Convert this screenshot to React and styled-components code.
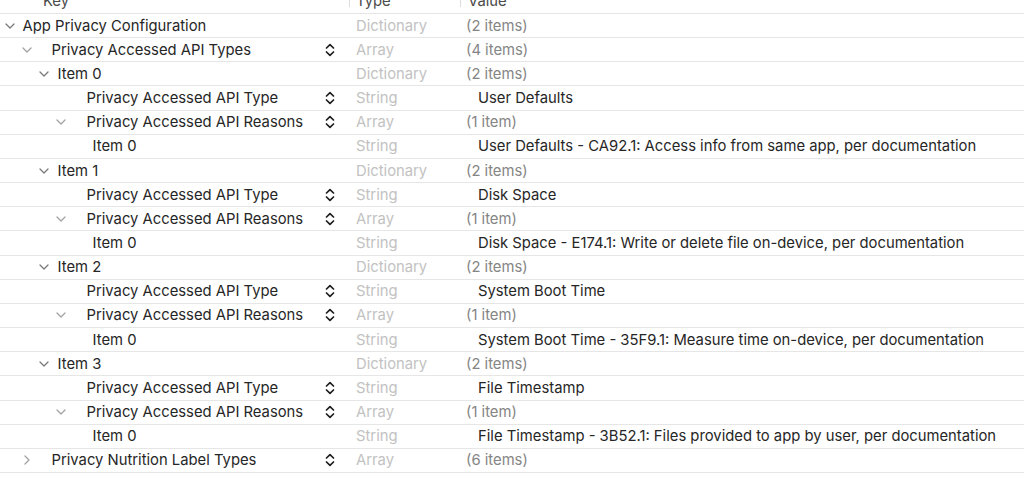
import React from "react";
import styled, { createGlobalStyle } from "styled-components";

const GlobalStyle = createGlobalStyle`
  body {
    margin: 0;
    background: #ffffff;
    font-family: Inter, "Liberation Sans", Arial, sans-serif;
    -webkit-font-smoothing: antialiased;
  }
`;

const ROW_HEIGHT = 24.17;
const FONT_SIZE = "14.8px";

const Editor = styled.div`
  width: 1024px;
  height: 496px;
  background: #ffffff;
  overflow: hidden;
`;

const Header = styled.div`
  display: grid;
  grid-template-columns: 349px 111px 1fr;
  align-items: start;
  height: 13px;
  border-bottom: 1px solid #e4e4e4;
  overflow: hidden;
`;

const HeaderCell = styled.div`
  display: flex;
  align-items: flex-end;
  height: 7px;
  padding-left: ${(props) => props.inset}px;
  border-left: ${(props) => (props.divider ? "1px solid #dcdcdc" : "none")};
  font-size: ${FONT_SIZE};
  line-height: 16px;
  color: #4a4a4a;
`;

const HeaderLabel = styled.span`
  margin-bottom: -2px;
  white-space: nowrap;
`;

const Row = styled.div`
  display: grid;
  grid-template-columns: 349px 111px 1fr;
  align-items: center;
  height: ${ROW_HEIGHT}px;
  box-sizing: border-box;
  border-bottom: 1px solid #e6e6e6;
  font-size: ${FONT_SIZE};
  white-space: nowrap;
`;

const KeyCell = styled.div`
  display: flex;
  align-items: center;
  padding-left: ${(props) => 5 + props.level * 17}px;
  padding-right: 14px;
`;

const Disclosure = styled.span`
  display: flex;
  align-items: center;
  justify-content: center;
  width: 10px;
  height: 10px;
  flex: none;
  color: ${(props) => (props.popup ? "#a3a3a3" : "#7a7a7a")};
`;

const KeyLabel = styled.span`
  margin-left: ${(props) => 7.5 + props.level * 0.5 + (props.popup ? 11.5 : 0)}px;
  color: #262626;
`;

const Stepper = styled.span`
  display: flex;
  margin-left: auto;
  color: #1e1e1e;
`;

const TypeCell = styled.div`
  padding-left: 7px;
  color: #c2c2c2;
`;

const ValueCell = styled.div`
  padding-left: ${(props) => (props.text ? 18 : 6)}px;
  color: ${(props) => (props.text ? "#262626" : "#858585")};
`;

const ChevronDown = () => (
  <svg width="10" height="6" viewBox="0 0 10 6" fill="none">
    <path d="M1 1 L5 5 L9 1" stroke="currentColor" strokeWidth="1.3" strokeLinecap="round" strokeLinejoin="round" />
  </svg>
);

const ChevronRight = () => (
  <svg width="6" height="10" viewBox="0 0 6 10" fill="none">
    <path d="M1 1 L5 5 L1 9" stroke="currentColor" strokeWidth="1.3" strokeLinecap="round" strokeLinejoin="round" />
  </svg>
);

const UpDown = () => (
  <svg width="10" height="14" viewBox="0 0 10 14" fill="none">
    <path d="M1.5 5 L5 1.6 L8.5 5" stroke="currentColor" strokeWidth="1.7" strokeLinecap="round" strokeLinejoin="round" />
    <path d="M1.5 9 L5 12.4 L8.5 9" stroke="currentColor" strokeWidth="1.7" strokeLinecap="round" strokeLinejoin="round" />
  </svg>
);

const reasons = [
  ["User Defaults", "User Defaults - CA92.1: Access info from same app, per documentation"],
  ["Disk Space", "Disk Space - E174.1: Write or delete file on-device, per documentation"],
  ["System Boot Time", "System Boot Time - 35F9.1: Measure time on-device, per documentation"],
  ["File Timestamp", "File Timestamp - 3B52.1: Files provided to app by user, per documentation"],
];

const rows = [
  { level: 0, state: "open", key: "App Privacy Configuration", type: "Dictionary", value: "(2 items)" },
  { level: 1, state: "open", popup: true, key: "Privacy Accessed API Types", type: "Array", value: "(4 items)" },
  ...reasons.flatMap(([name, reason], i) => [
    { level: 2, state: "open", key: `Item ${i}`, type: "Dictionary", value: "(2 items)" },
    { level: 3, popup: true, key: "Privacy Accessed API Type", type: "String", value: name, text: true },
    { level: 3, state: "open", popup: true, key: "Privacy Accessed API Reasons", type: "Array", value: "(1 item)" },
    { level: 4, key: "Item 0", type: "String", value: reason, text: true },
  ]),
  { level: 1, state: "closed", popup: true, key: "Privacy Nutrition Label Types", type: "Array", value: "(6 items)" },
];

const PlistRow = ({ row }) => (
  <Row>
    <KeyCell level={row.level}>
      <Disclosure popup={row.popup}>
        {row.state === "open" && <ChevronDown />}
        {row.state === "closed" && <ChevronRight />}
      </Disclosure>
      <KeyLabel level={row.level} popup={row.popup}>{row.key}</KeyLabel>
      {row.popup && (
        <Stepper>
          <UpDown />
        </Stepper>
      )}
    </KeyCell>
    <TypeCell>{row.type}</TypeCell>
    <ValueCell text={row.text}>{row.value}</ValueCell>
  </Row>
);

export default function App() {
  return (
    <>
      <GlobalStyle />
      <Editor>
        <Header>
          <HeaderCell inset={43}>
            <HeaderLabel>Key</HeaderLabel>
          </HeaderCell>
          <HeaderCell divider inset={6}>
            <HeaderLabel>Type</HeaderLabel>
          </HeaderCell>
          <HeaderCell divider inset={7}>
            <HeaderLabel>Value</HeaderLabel>
          </HeaderCell>
        </Header>
        {rows.map((row, i) => (
          <PlistRow key={i} row={row} />
        ))}
      </Editor>
    </>
  );
}
